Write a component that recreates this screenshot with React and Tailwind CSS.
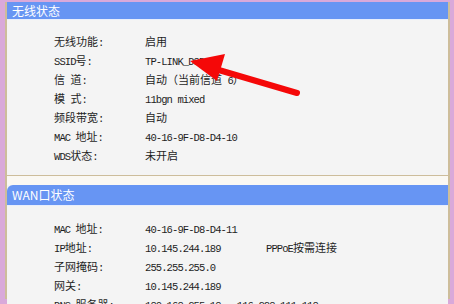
import React from "react";

function T({ s }) {
  const runs = [];
  for (const ch of s) {
    const a = ch.charCodeAt(0) < 128;
    if (runs.length && runs[runs.length - 1].a === a) runs[runs.length - 1].t += ch;
    else runs.push({ a, t: ch });
  }
  return runs.map((r, i) =>
    r.a ? (
      <span key={i} className="font-['Liberation_Mono',monospace] text-[10.5px] tracking-[-0.9px] whitespace-pre">
        {r.t}
      </span>
    ) : (
      <span key={i} className="font-['Noto_Sans_CJK_SC',sans-serif] text-[11px] whitespace-pre">
        {r.t}
      </span>
    )
  );
}

function Row({ label, value, extra }) {
  return (
    <div className="flex h-[19px] items-center pl-[47px] text-[#1e1e1e]">
      <div className="w-[91px] shrink-0">
        <T s={label} />
      </div>
      <div className="w-[121px] shrink-0 whitespace-nowrap">
        <T s={value} />
      </div>
      {extra && (
        <div className="whitespace-nowrap">
          <T s={extra} />
        </div>
      )}
    </div>
  );
}

function Header({ title, className }) {
  return (
    <div
      className={
        "flex items-center bg-[#6795f3] pl-[5px] text-white font-['Noto_Sans_CJK_SC',sans-serif] text-[12px] border-b border-[#e8eefc] " +
        className
      }
    >
      {title}
    </div>
  );
}

export default function App() {
  return (
    <div className="relative h-[304px] w-[454px] overflow-hidden bg-[#d9a9da] pt-[2px] pb-[5px] pl-[5px] pr-[4px]">
      <div className="flex h-full flex-col border-x-2 border-[#cdbd9b] bg-[#faf8f3]">
        <div className="border-b border-[#cdbd9b] bg-[#f4f4f4]">
          <Header title="无线状态" className="h-[18px]" />
          <div className="pt-[10px] pb-[12px]">
            <Row label="无线功能:" value="启用" />
            <Row label="SSID号:" value="TP-LINK_D8D410" />
            <Row label="信 道:" value="自动（当前信道 6）" />
            <Row label="模 式:" value="11bgn mixed" />
            <Row label="频段带宽:" value="自动" />
            <Row label="MAC 地址:" value="40-16-9F-D8-D4-10" />
            <Row label="WDS状态:" value="未开启" />
          </div>
        </div>
        <div className="mt-[9px] flex-1 bg-[#f4f4f4]">
          <Header title="WAN口状态" className="h-[21px] rounded-tl-[6px]" />
          <div className="pt-[11px]">
            <Row label="MAC 地址:" value="40-16-9F-D8-D4-11" />
            <Row label="IP地址:" value="10.145.244.189" extra="PPPoE按需连接" />
            <Row label="子网掩码:" value="255.255.255.0" />
            <Row label="网关:" value="10.145.244.189" />
            <Row label="DNS 服务器:" value="180.168.255.18 , 116.228.111.118" />
          </div>
        </div>
      </div>
      <svg className="pointer-events-none absolute left-0 top-0" width="454" height="304" viewBox="0 0 454 304">
        <line x1="212" y1="68" x2="297" y2="93" stroke="#f50808" strokeWidth="6" strokeLinecap="round" />
        <polygon points="190,61 225,54 217,81" fill="#f50808" />
      </svg>
    </div>
  );
}
